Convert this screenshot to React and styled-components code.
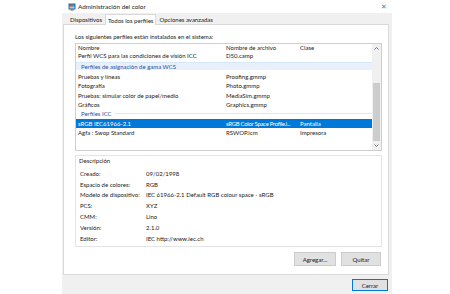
import React from 'react';
import styled, { createGlobalStyle } from 'styled-components';

const GlobalStyle = createGlobalStyle`
  *, *::before, *::after {
    box-sizing: border-box;
  }
  html, body {
    margin: 0;
    padding: 0;
    background: #fff;
  }
  body {
    font-family: Lato, "Noto Sans", sans-serif;
    font-size: 6px;
    color: #1a1a1a;
  }
`

const Window = styled.div`
  margin-left: 62px;
  width: 330px;
  height: 294px;
  display: flex;
  flex-direction: column;
  background: #f0f0f0;
  overflow: hidden;
`

const TitleBar = styled.div`
  height: 13px;
  flex: none;
  background: #fff;
  display: flex;
  align-items: center;
  padding: 0 2px 0 6px;
  gap: 2px;
`

const Title = styled.span`
  font-size: 6.4px;
  color: #222;
`

const Close = styled.span`
  margin-left: auto;
  width: 12px;
  text-align: center;
  font-size: 7px;
  color: #777;
`

const Client = styled.div`
  flex: 1;
  display: flex;
  flex-direction: column;
  padding: 0 3px 0 1px;
`

const Tabs = styled.div`
  height: 11px;
  flex: none;
  display: flex;
  align-items: flex-end;
  padding-left: 4px;
`

const Tab = styled.div`
  height: ${p => (p.$active ? '11px' : '10px')};
  padding: 0 2px;
  display: flex;
  align-items: center;
  background: ${p => (p.$active ? '#fff' : 'transparent')};
  border: 1px solid ${p => (p.$active ? '#d9d9d9' : 'transparent')};
  border-bottom: none;
  margin-bottom: ${p => (p.$active ? '-1px' : '0')};
  position: relative;
  z-index: 1;
  white-space: nowrap;
`

const Panel = styled.div`
  height: 251px;
  flex: none;
  background: #fff;
  border: 1px solid #d9d9d9;
  padding: 8px 6px 0 11px;
  display: flex;
  flex-direction: column;
`

const Intro = styled.div`
  height: 8px;
  line-height: 8px;
  margin-bottom: 2px;
`

const ListBox = styled.div`
  height: 108px;
  flex: none;
  border: 1px solid #cfcfcf;
  display: flex;
  overflow: hidden;
`

const ListArea = styled.div`
  flex: 1;
  overflow: hidden;
`

const Row = styled.div`
  display: grid;
  grid-template-columns: 148px 74px 1fr;
  align-items: center;
  height: ${p => p.$h || '9.33px'};
  background: ${p => (p.$selected ? '#0078d7' : 'transparent')};
  color: ${p => (p.$selected ? '#fff' : 'inherit')};
`

const Cell = styled.div`
  padding: 0 2px;
  white-space: nowrap;
  overflow: hidden;
  letter-spacing: ${p => (p.$tight ? '-0.3px' : 'normal')};
`

const GroupWrap = styled.div`
  padding: ${p => p.$pad || '0'};
`

const GroupRow = styled.div`
  height: ${p => p.$h || '8px'};
  display: flex;
  align-items: center;
  gap: 3px;
  padding-left: 5px;
  color: #2f4f9e;
  background: ${p => (p.$hot ? '#e8f1fb' : 'transparent')};
  border-top: ${p => (p.$hot ? '1px solid #d6e7f8' : 'none')};
`

const GroupLine = styled.div`
  flex: 1;
  height: 1px;
  background: #e2e8f0;
`

const Scrollbar = styled.div`
  width: 9px;
  flex: none;
  display: flex;
  flex-direction: column;
  background: #f0f0f0;
`

const Arrow = styled.div`
  height: 9px;
  flex: none;
  display: flex;
  align-items: center;
  justify-content: center;
`

const Track = styled.div`
  height: ${p => p.$h}px;
  flex: none;
`

const Thumb = styled.div`
  flex: 1;
  background: #cdcdcd;
  margin: 0 1px;
`

const DescBox = styled.div`
  margin-top: 4px;
  height: 92px;
  flex: none;
  border: 1px solid #e4e4e4;
  padding: 1px 0 0 3px;
`

const DescTitle = styled.div`
  height: 8px;
  line-height: 8px;
  margin-bottom: 3px;
`

const DescGrid = styled.div`
  display: grid;
  grid-template-columns: 66px 1fr;
  grid-auto-rows: 10.8px;
  align-items: center;
  padding-left: 1px;
`

const ButtonRow = styled.div`
  display: flex;
  justify-content: flex-end;
  gap: 5px;
  margin-top: 5px;
  padding-right: 1px;
`

const Button = styled.div`
  width: ${p => p.$w}px;
  height: ${p => p.$h || 14}px;
  background: #e1e1e1;
  border: 1px solid ${p => (p.$default ? '#0078d7' : '#cccccc')};
  display: flex;
  align-items: center;
  justify-content: center;
`

const Footer = styled.div`
  flex: 1;
  display: flex;
  justify-content: flex-end;
  align-items: flex-start;
  padding: 4px 1px 0 0;
`

const AppIcon = () => (
  <svg width="8" height="8" viewBox="0 0 8 8">
    <rect x="0.5" y="0.5" width="7" height="6" fill="#2a64c8" />
    <rect x="1.5" y="1.5" width="2.5" height="2" fill="#e74c3c" />
    <rect x="4" y="1.5" width="2.5" height="2" fill="#3cb043" />
    <rect x="1.5" y="3.5" width="2.5" height="2" fill="#f4c430" />
    <rect x="4" y="3.5" width="2.5" height="2" fill="#9ad0ff" />
    <rect x="2.5" y="6.5" width="3" height="1" fill="#555" />
  </svg>
)

const Chevron = ({ up }) => (
  <svg width="5" height="3" viewBox="0 0 5 3">
    <path
      d={up ? 'M0.5 2.5 L2.5 0.5 L4.5 2.5' : 'M0.5 0.5 L2.5 2.5 L4.5 0.5'}
      fill="none"
      stroke="#606060"
      strokeWidth="0.8"
    />
  </svg>
)

const gamut = [
  ['Pruebas y líneas', 'Proofing.gmmp'],
  ['Fotografía', 'Photo.gmmp'],
  ['Pruebas: simular color de papel/medio', 'MediaSim.gmmp'],
  ['Gráficos', 'Graphics.gmmp'],
]

const details = [
  ['Creado:', '09/02/1998'],
  ['Espacio de colores:', 'RGB'],
  ['Modelo de dispositivo:', 'IEC 61966-2.1 Default RGB colour space - sRGB'],
  ['PCS:', 'XYZ'],
  ['CMM:', 'Lino'],
  ['Versión:', '2.1.0'],
  ['Editor:', 'IEC http://www.iec.ch'],
]

export default function App() {
  return (
    <>
      <GlobalStyle />
      <Window>
        <TitleBar>
          <AppIcon />
          <Title>Administración del color</Title>
          <Close>✕</Close>
        </TitleBar>
        <Client>
          <Tabs>
            <Tab>Dispositivos</Tab>
            <Tab $active>Todos los perfiles</Tab>
            <Tab>Opciones avanzadas</Tab>
          </Tabs>
          <Panel>
            <Intro>Los siguientes perfiles están instalados en el sistema:</Intro>
            <ListBox>
              <ListArea>
                <Row $h="7px">
                  <Cell>Nombre</Cell>
                  <Cell>Nombre de archivo</Cell>
                  <Cell>Clase</Cell>
                </Row>
                <Row $h="8px">
                  <Cell>Perfil WCS para las condiciones de visión ICC</Cell>
                  <Cell>D50.camp</Cell>
                  <Cell />
                </Row>
                <GroupWrap $pad="3px 0 2px">
                  <GroupRow $hot>Perfiles de asignación de gama WCS</GroupRow>
                </GroupWrap>
                {gamut.map(([name, file]) => (
                  <Row key={file}>
                    <Cell>{name}</Cell>
                    <Cell>{file}</Cell>
                    <Cell />
                  </Row>
                ))}
                <GroupRow $h="9.33px">
                  Perfiles ICC
                  <GroupLine />
                </GroupRow>
                <Row $selected>
                  <Cell>sRGB IEC61966-2.1</Cell>
                  <Cell $tight>sRGB Color Space Profile.i...</Cell>
                  <Cell>Pantalla</Cell>
                </Row>
                <Row>
                  <Cell>Agfa : Swop Standard</Cell>
                  <Cell>RSWOP.icm</Cell>
                  <Cell>Impresora</Cell>
                </Row>
              </ListArea>
              <Scrollbar>
                <Arrow>
                  <Chevron up />
                </Arrow>
                <Track $h={30} />
                <Thumb />
                <Arrow>
                  <Chevron />
                </Arrow>
              </Scrollbar>
            </ListBox>
            <DescBox>
              <DescTitle>Descripción</DescTitle>
              <DescGrid>
                {details.map(([k, v]) => (
                  <React.Fragment key={k}>
                    <div>{k}</div>
                    <div>{v}</div>
                  </React.Fragment>
                ))}
              </DescGrid>
            </DescBox>
            <ButtonRow>
              <Button $w={42}>Agregar...</Button>
              <Button $w={40}>Quitar</Button>
            </ButtonRow>
          </Panel>
          <Footer>
            <Button $w={36} $h={12} $default>
              Cerrar
            </Button>
          </Footer>
        </Client>
      </Window>
    </>
  )
}
